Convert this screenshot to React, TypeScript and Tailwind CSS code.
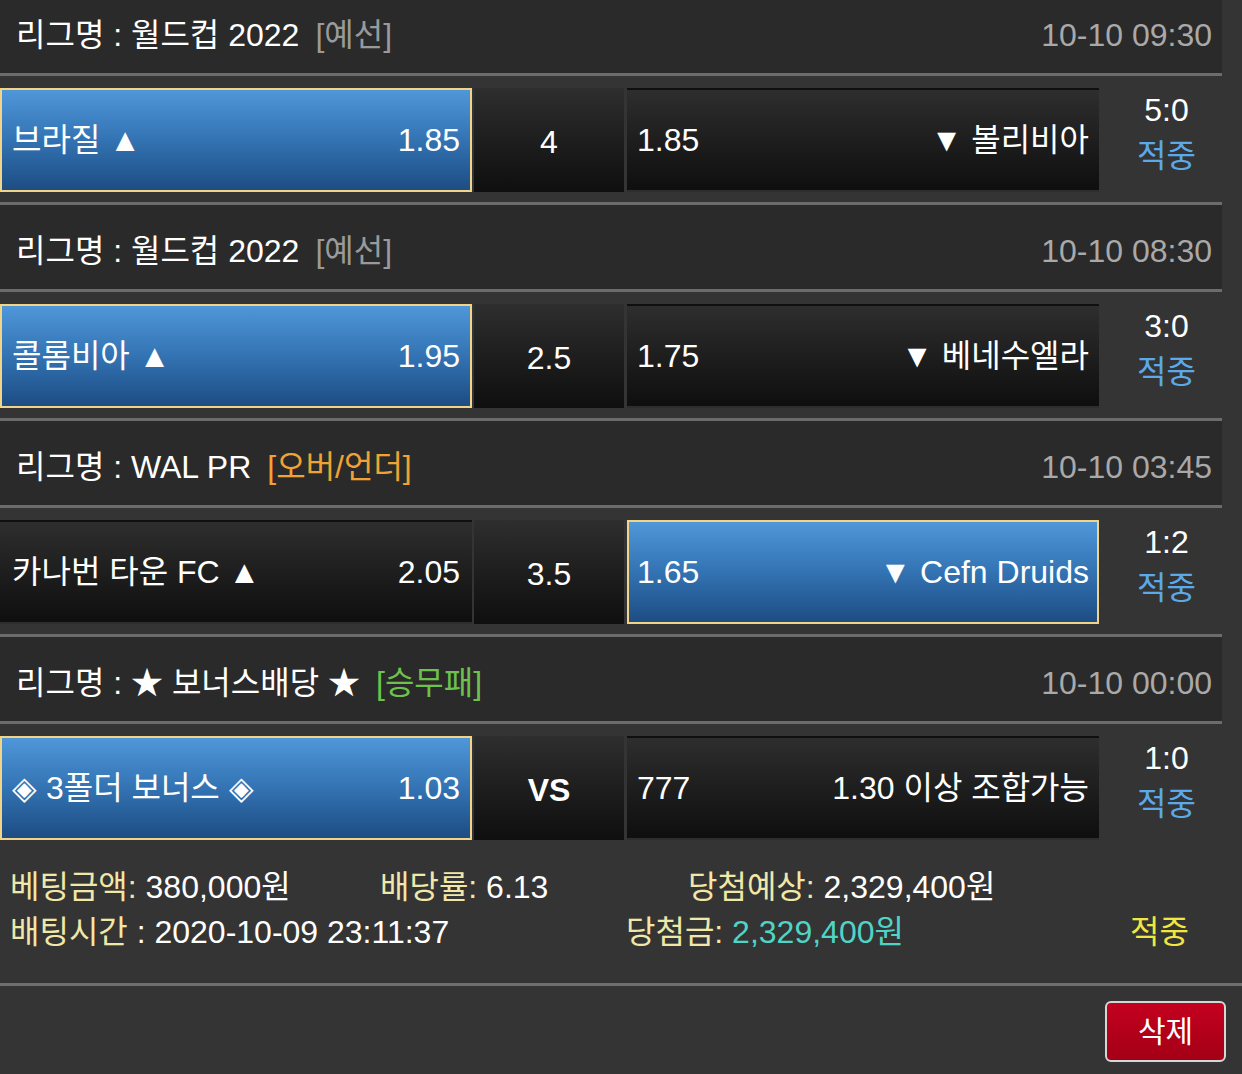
import React from "react";

type Match = {
  league: React.ReactNode;
  tag: string;
  tagColor: string;
  date: string;
  home: string;
  homeOdds: string;
  line: string;
  lineBold?: boolean;
  awayOdds: string;
  away: string;
  pick: "home" | "away";
  score: string;
};

const matches: Match[] = [
  {
    league: "리그명 : 월드컵 2022",
    tag: "[예선]",
    tagColor: "text-[#9a9a9a]",
    date: "10-10 09:30",
    home: "브라질 ▲",
    homeOdds: "1.85",
    line: "4",
    awayOdds: "1.85",
    away: "▼ 볼리비아",
    pick: "home",
    score: "5:0",
  },
  {
    league: "리그명 : 월드컵 2022",
    tag: "[예선]",
    tagColor: "text-[#9a9a9a]",
    date: "10-10 08:30",
    home: "콜롬비아 ▲",
    homeOdds: "1.95",
    line: "2.5",
    awayOdds: "1.75",
    away: "▼ 베네수엘라",
    pick: "home",
    score: "3:0",
  },
  {
    league: "리그명 : WAL PR",
    tag: "[오버/언더]",
    tagColor: "text-[#f0a334]",
    date: "10-10 03:45",
    home: "카나번 타운 FC ▲",
    homeOdds: "2.05",
    line: "3.5",
    awayOdds: "1.65",
    away: "▼ Cefn Druids",
    pick: "away",
    score: "1:2",
  },
  {
    league: "리그명 : ★ 보너스배당 ★",
    tag: "[승무패]",
    tagColor: "text-[#6cc24a]",
    date: "10-10 00:00",
    home: "◈ 3폴더 보너스 ◈",
    homeOdds: "1.03",
    line: "VS",
    lineBold: true,
    awayOdds: "777",
    away: "1.30 이상 조합가능",
    pick: "home",
    score: "1:0",
  },
];

const picked =
  "border-2 border-[#f1d488] bg-gradient-to-b from-[#4f97d9] via-[#3373b3] to-[#1d4d83]";
const plain = "border-2 border-transparent bg-gradient-to-b from-[#2e2e2e] to-[#0f0f0f]";

function Separator() {
  return <div className="h-[3px] bg-[#6c6c6c]" />;
}

function MatchBlock({ m }: { m: Match }) {
  return (
    <>
      <div className="flex h-[84px] items-center justify-between bg-[#2a2a2a] pl-[16px] pr-[10px] pt-[8px]">
        <div className="flex items-center">
          <span className="text-white">{m.league}</span>
          <span className={`ml-[16px] ${m.tagColor}`}>{m.tag}</span>
        </div>
        <span className="text-[#a9a9a9]">{m.date}</span>
      </div>
      <Separator />
      <div className="flex h-[126px] pt-[12px] pb-[10px]">
        <div
          className={`flex w-[472px] items-center justify-between px-[10px] text-white ${
            m.pick === "home" ? picked : plain
          }`}
        >
          <span>{m.home}</span>
          <span>{m.homeOdds}</span>
        </div>
        <div
          className={`ml-[2px] flex w-[150px] items-center justify-center bg-gradient-to-b from-[#2e2e2e] to-[#0f0f0f] pt-[4px] text-white ${
            m.lineBold ? "font-bold" : ""
          }`}
        >
          {m.line}
        </div>
        <div
          className={`ml-[3px] flex w-[472px] items-center justify-between px-[8px] text-white ${
            m.pick === "away" ? picked : plain
          }`}
        >
          <span>{m.awayOdds}</span>
          <span>{m.away}</span>
        </div>
        <div className="-mt-[1px] flex flex-1 flex-col items-center pl-[12px] leading-[46px]">
          <span className="text-white">{m.score}</span>
          <span className="text-[#5ba9e8]">적중</span>
        </div>
      </div>
    </>
  );
}

export default function App() {
  return (
    <div
      className="h-[1074px] w-[1242px] overflow-hidden bg-[#343434] text-[32px]"
      style={{ fontFamily: '"Liberation Sans", "Noto Sans CJK KR", sans-serif' }}
    >
      <div className="-mt-[11px] w-[1222px]">
        {matches.map((m, i) => (
          <div key={i}>
            <MatchBlock m={m} />
            {i < matches.length - 1 && <Separator />}
          </div>
        ))}
      </div>

      <div className="px-[10px] pt-[15px] leading-[45px]">
        <div className="flex">
          <div className="w-[370px]">
            <span className="text-[#f0e7a8]">베팅금액:</span>
            <span className="text-white"> 380,000원</span>
          </div>
          <div className="w-[308px]">
            <span className="text-[#f0e7a8]">배당률:</span>
            <span className="text-white"> 6.13</span>
          </div>
          <div>
            <span className="text-[#f0e7a8]">당첨예상:</span>
            <span className="text-white"> 2,329,400원</span>
          </div>
        </div>
        <div className="flex">
          <div className="w-[616px]">
            <span className="text-[#f0e7a8]">배팅시간</span>
            <span className="text-white"> : 2020-10-09 23:11:37</span>
          </div>
          <div className="w-[504px]">
            <span className="text-[#f0e7a8]">당첨금:</span>
            <span className="text-[#4fd4c6]"> 2,329,400원</span>
          </div>
          <span className="text-[#f2e642]">적중</span>
        </div>
      </div>

      <div className="mt-[28px] h-[3px] bg-[#6f6f6f]" />

      <div className="flex justify-end pr-[16px] pt-[15px]">
        <button className="flex h-[61px] w-[121px] items-center justify-center rounded-[6px] border-2 border-[#d6d6d6] bg-gradient-to-b from-[#c4001f] to-[#a30016] text-[30px] text-white">
          삭제
        </button>
      </div>
    </div>
  );
}
